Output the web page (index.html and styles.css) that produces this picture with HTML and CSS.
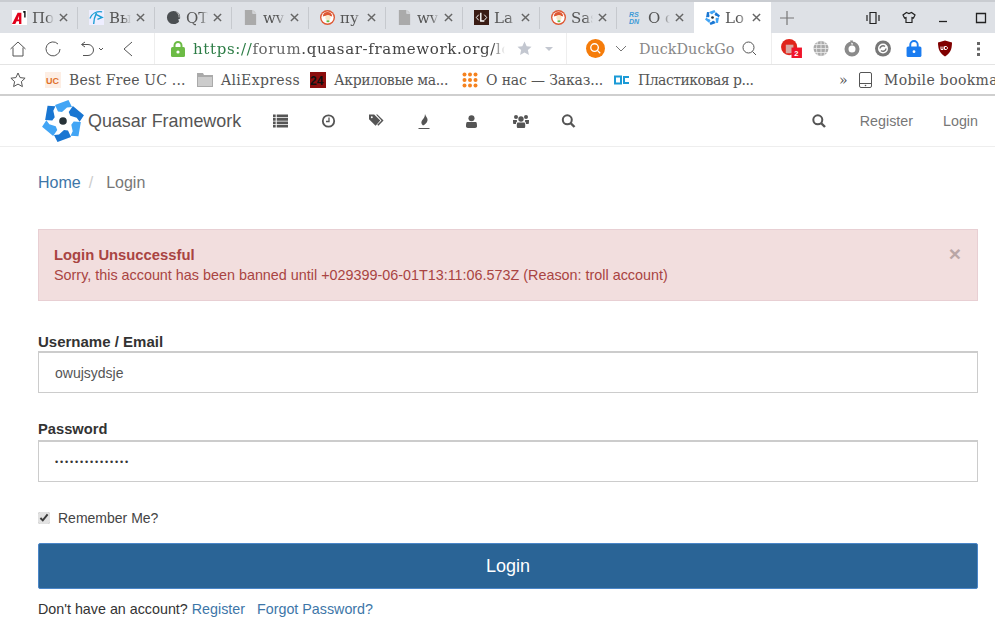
FILE: index.html
```html
<!DOCTYPE html>
<html lang="en">
<head>
<meta charset="utf-8">
<title>Login | Quasar Framework</title>
<link rel="stylesheet" href="styles.css">
</head>
<body>
<svg class="defs" aria-hidden="true">
  <symbol id="quasar" viewBox="-21 -21 42 42">
    <path fill="#42a5f5" d="M-8-16L5.500-21 9-14 4-13.500-1-9-5-9.500z"/>
    <path fill="#1976d2" d="M-8-16L5.500-21 9-14 4-13.500-1-9-5-9.500z" transform="rotate(60)"/>
    <path fill="#42a5f5" d="M-8-16L5.500-21 9-14 4-13.500-1-9-5-9.500z" transform="rotate(120)"/>
    <path fill="#1976d2" d="M-8-16L5.500-21 9-14 4-13.500-1-9-5-9.500z" transform="rotate(180)"/>
    <path fill="#42a5f5" d="M-8-16L5.500-21 9-14 4-13.500-1-9-5-9.500z" transform="rotate(240)"/>
    <path fill="#1976d2" d="M-8-16L5.500-21 9-14 4-13.500-1-9-5-9.500z" transform="rotate(300)"/>
    <circle r="3.800" fill="#263238"/>
  </symbol>
  <symbol id="duck" viewBox="0 0 16 16">
    <circle cx="8" cy="8" r="8" fill="#de5833"/>
    <circle cx="8" cy="8" r="6.500" fill="#fff"/>
    <path fill="#de5833" d="M3 7c0-3 2-5 5-5s5 2 5 5l-3-1H6z"/>
    <circle cx="8.500" cy="8" r="2.800" fill="#f7e6c8"/>
    <path fill="#65bc46" d="M7 11h3v2H7z"/>
  </symbol>
  <symbol id="doc" viewBox="0 0 14 16">
    <path fill="#aaa" d="M1 0h8v4h4v12H1z"/>
    <path fill="#c8c8c8" d="M10 0l3 3h-3z"/>
  </symbol>
  <symbol id="x" viewBox="0 0 10 10">
    <path d="M1 1l8 8M9 1l-8 8" stroke="#666" stroke-width="1.600" fill="none"/>
  </symbol>
</svg>

<div class="tabs">
  <div class="tab">
    <svg class="fav" viewBox="0 0 16 16"><rect width="16" height="16" fill="#fff"/><path fill="#e1001a" d="M0 15L6 3h4v12H7.500v-3H5l-1.500 3zM6 10h1.500V6z" fill-rule="evenodd"/><path fill="#111" d="M12 1h2.500v7H13V3h-1z"/></svg>
    <span class="tab-title">Пос</span>
    <svg class="tab-x"><use href="#x"/></svg>
  </div>
  <div class="tab">
    <svg class="fav" viewBox="0 0 16 16"><rect width="16" height="16" fill="#eef"/><path d="M1 9c2-5 7-8 13-7M8 3C6 7 5 11 5 15M8 5l6 3-5 2" stroke="#1c9fd6" stroke-width="1.500" fill="none"/></svg>
    <span class="tab-title">Вы</span>
    <svg class="tab-x"><use href="#x"/></svg>
  </div>
  <div class="tab">
    <svg class="fav" viewBox="0 0 16 16"><path fill="#4b4f52" d="M8 1a7 7 0 1 0 0 14c3 0 5-1 6-3l-1-2 2-1c1-5-3-8-7-8z"/><path d="M11 2c2 1 3 3 3 6" stroke="#ccc" fill="none"/></svg>
    <span class="tab-title">QT</span>
    <svg class="tab-x"><use href="#x"/></svg>
  </div>
  <div class="tab">
    <svg class="fav"><use href="#doc"/></svg>
    <span class="tab-title">wv</span>
    <svg class="tab-x"><use href="#x"/></svg>
  </div>
  <div class="tab">
    <svg class="fav"><use href="#duck"/></svg>
    <span class="tab-title">пу</span>
    <svg class="tab-x"><use href="#x"/></svg>
  </div>
  <div class="tab">
    <svg class="fav"><use href="#doc"/></svg>
    <span class="tab-title">wv</span>
    <svg class="tab-x"><use href="#x"/></svg>
  </div>
  <div class="tab">
    <svg class="fav" viewBox="0 0 16 16"><rect width="16" height="16" fill="#3a1c14"/><path d="M5 5L2.500 8 5 11M11 5l2.500 3L11 11" stroke="#fff" fill="none"/><path fill="#fff" d="M6.500 3H8v8h3v1.500H6.500z"/></svg>
    <span class="tab-title">La</span>
    <svg class="tab-x"><use href="#x"/></svg>
  </div>
  <div class="tab">
    <svg class="fav"><use href="#duck"/></svg>
    <span class="tab-title">Sas</span>
    <svg class="tab-x"><use href="#x"/></svg>
  </div>
  <div class="tab">
    <svg class="fav" viewBox="0 0 16 16"><text x="1" y="7" class="fav-rs">RS</text><text x="1" y="15" class="fav-rs">DN</text></svg>
    <span class="tab-title">O с</span>
    <svg class="tab-x"><use href="#x"/></svg>
  </div>
  <div class="tab tab-active">
    <svg class="fav"><use href="#quasar"/></svg>
    <span class="tab-title">Lo</span>
    <svg class="tab-x"><use href="#x"/></svg>
  </div>
  <svg class="tab-new" viewBox="0 0 14 14"><path d="M7 0v14M0 7h14" stroke="#777" stroke-width="1.200" fill="none"/></svg>
  <div class="win">
    <svg class="win-ico" viewBox="0 0 14 14"><path d="M4 1.500h6v11H4zM1 4v6M13 4v6" stroke="#222" stroke-width="1.200" fill="none"/></svg>
    <svg class="win-ico" viewBox="0 0 14 14"><path d="M4.500 1.500l2.500 1 2.500-1 3.500 2.500-1.500 3-1.500-.5v5h-6v-5l-1.500.5L1 4z" stroke="#222" stroke-width="1.200" fill="none"/></svg>
    <svg class="win-ico" viewBox="0 0 14 14"><path d="M1 10.500h8" stroke="#222" stroke-width="1.300" fill="none"/></svg>
    <svg class="win-ico" viewBox="0 0 14 14"><path d="M2.500 2.500h9v9h-9z" stroke="#222" stroke-width="1.300" fill="none"/></svg>
  </div>
</div>

<div class="toolbar">
  <div class="nav-btns">
    <svg class="tool tool-home" viewBox="0 0 16 16"><path d="M.5 8L8 1l7.500 7M3 6.500V15h10V6.500" stroke="#555" fill="none"/></svg>
    <svg class="tool tool-reload" viewBox="0 0 16 16"><path d="M13 3A7 7 0 1 0 15 8" stroke="#555" fill="none"/></svg>
    <svg class="tool tool-undo" viewBox="0 0 26 16"><path d="M5 1L1.500 3.500 5 6M2 3.500h6a5.500 5.500 0 0 1 0 11H3" stroke="#555" fill="none"/><path d="M19 7l2 2 2-2" stroke="#555" fill="none"/></svg>
    <svg class="tool tool-back" viewBox="0 0 10 16"><path d="M9 1L1 8l8 7" stroke="#555" fill="none"/></svg>
  </div>
  <div class="address">
    <svg class="lock" viewBox="0 0 14 16"><path d="M3.500 7V4.500a3.500 3.500 0 0 1 7 0V7" stroke="#6cbb45" stroke-width="2" fill="none"/><rect y="6" width="14" height="10" rx="1.500" fill="#6cbb45"/><circle cx="7" cy="11" r="1.600" fill="#fff"/></svg>
    <span class="url"><span class="url-scheme">https://</span><span class="url-mute">forum</span>.quasar-framework.org/login</span>
    <svg class="star-solid" viewBox="0 0 16 16"><path fill="#c3c7d0" d="M8 .5l2.300 5 5.200.6-3.900 3.500 1.100 5.400L8 12.300 3.300 15l1.100-5.400L.5 6.100l5.200-.6z"/></svg>
    <svg class="caret" viewBox="0 0 8 4"><path fill="#c3c7d0" d="M0 0h8L4 4z"/></svg>
  </div>
  <div class="search">
    <svg class="search-logo" viewBox="0 0 20 20"><circle cx="10" cy="10" r="10" fill="#f57c0a"/><circle cx="9" cy="9" r="4" stroke="#fff" stroke-width="1.400" fill="none"/><path d="M12 12l3 3" stroke="#fff" stroke-width="1.400"/></svg>
    <svg class="search-chev" viewBox="0 0 12 7"><path d="M1 1l5 5 5-5" stroke="#777" fill="none"/></svg>
    <span class="search-text">DuckDuckGo</span>
    <svg class="search-mag" viewBox="0 0 15 15"><circle cx="6.500" cy="6.500" r="5.500" stroke="#555" fill="none"/><path d="M10.500 10.500L14 14" stroke="#555" fill="none"/></svg>
  </div>
  <div class="exts">
    <svg class="ext" viewBox="0 0 22 20"><circle cx="8.500" cy="8.500" r="8.500" fill="#e0251b"/><path d="M5 6h8v9H5z" fill="#d9a9a3"/><rect x="11" y="9" width="11" height="11" fill="#f0142a"/><text x="14" y="18" class="ext-num">2</text></svg>
    <svg class="ext" viewBox="0 0 16 16"><circle cx="8" cy="8" r="7.500" fill="#aaa"/><path d="M0 8h16M8 0v16M2 4h12M2 12h12M5 1c-2 4-2 10 0 14M11 1c2 4 2 10 0 14" stroke="#eee" stroke-width=".8" fill="none"/></svg>
    <svg class="ext" viewBox="0 0 16 16"><circle cx="8" cy="8.500" r="5.500" stroke="#8a8a8a" stroke-width="4" fill="none"/><path d="M6 0h3L8 5z" fill="#8a8a8a"/><path d="M7 2l2 1-1 2z" fill="#fff"/></svg>
    <svg class="ext" viewBox="0 0 16 16"><circle cx="8" cy="8" r="8" fill="#777"/><circle cx="8" cy="8" r="5" fill="#fff"/><path d="M5 8a3 3 0 0 1 5-2M11 8a3 3 0 0 1-5 2" stroke="#777" stroke-width="1.500" fill="none"/></svg>
    <svg class="ext" viewBox="0 0 14 16"><path d="M3.500 7V4.500a3.500 3.500 0 0 1 7 0V7" stroke="#1b7cf0" stroke-width="1.800" fill="none"/><rect y="6" width="14" height="10" rx="1.500" fill="#1b7cf0"/><circle cx="7" cy="11" r="1.300" fill="#fff"/></svg>
    <svg class="ext" viewBox="0 0 16 16"><path fill="#800000" d="M8 0l7 2c0 7-2 11-7 14C3 13 1 9 1 2z"/><path d="M4 6v3h2V6M7.500 6v3H9c2 0 2-3 0-3z" stroke="#fff" fill="none"/></svg>
    <svg class="dots" viewBox="0 0 3 14"><path fill="#666" d="M0 0h3v3H0zM0 5.500h3v3H0zM0 11h3v3H0z"/></svg>
  </div>
</div>

<div class="bookmarks">
  <svg class="bm-star" viewBox="0 0 16 16"><path d="M8 1l2.100 4.600 5 .6-3.700 3.400 1 5L8 12.100 3.600 14.600l1-5L.9 6.200l5-.6z" stroke="#555" fill="none"/></svg>
  <div class="bm bm-1">
    <svg class="bm-ico" viewBox="0 0 16 16"><rect width="16" height="16" fill="#fdeee4"/><text x="1" y="12" class="bm-uc">UC</text></svg>
    <span>Best Free UC ...</span>
  </div>
  <div class="bm bm-2">
    <svg class="bm-ico" viewBox="0 0 16 14"><path fill="#aaa" d="M0 0h6l1 2h9v12H0z"/><path fill="#ccc" d="M1 4h14v9H1z"/></svg>
    <span>AliExpress</span>
  </div>
  <div class="bm bm-3">
    <svg class="bm-ico" viewBox="0 0 16 16"><rect width="16" height="16" fill="#8b0d0d"/><text x="0" y="13" class="bm-24">24</text></svg>
    <span>Акриловые ма...</span>
  </div>
  <div class="bm bm-4">
    <svg class="bm-ico" viewBox="0 0 16 16"><g fill="#f5821f"><circle cx="2.500" cy="2.500" r="2"/><circle cx="8" cy="2.500" r="2"/><circle cx="13.500" cy="2.500" r="2"/><circle cx="2.500" cy="8" r="2"/><circle cx="8" cy="8" r="2"/><circle cx="13.500" cy="8" r="2"/><circle cx="2.500" cy="13.500" r="2"/><circle cx="8" cy="13.500" r="2"/><circle cx="13.500" cy="13.500" r="2"/></g></svg>
    <span>О нас — Заказ...</span>
  </div>
  <div class="bm bm-5">
    <svg class="bm-ico" viewBox="0 0 16 10"><path d="M7 1.500H1v7h6zM15 2H10v6h5" stroke="#1b9ad6" stroke-width="2" fill="none"/></svg>
    <span>Пластиковая р...</span>
  </div>
  <span class="bm-more">»</span>
  <svg class="bm-phone" viewBox="0 0 13 16"><rect x=".5" y=".5" width="12" height="15" rx="1.500" stroke="#555" fill="none"/><path d="M.5 11.500h12" stroke="#555"/><circle cx="6.500" cy="13.500" r=".8" fill="#555"/></svg>
  <span class="bm-mobile">Mobile bookmarks</span>
</div>

<header class="navbar">
  <a class="brand">
    <svg class="brand-logo"><use href="#quasar"/></svg>
    <span class="brand-name">Quasar Framework</span>
  </a>
  <nav class="nav-icons">
    <a class="nav-icon"><svg viewBox="0 0 14 12"><path fill="#555" d="M0 0h2.500v2.500H0zM3.500 0H14v2.500H3.500zM0 3.250h2.500v2.500H0zM3.500 3.250H14v2.500H3.500zM0 6.500h2.500V9H0zM3.500 6.500H14V9H3.500zM0 9.750h2.500V12H0zM3.500 9.750H14V12H3.500z"/></svg></a>
    <a class="nav-icon"><svg viewBox="0 0 14 14"><circle cx="7" cy="7" r="5.700" stroke="#555" stroke-width="1.800" fill="none"/><path d="M7.500 3.500v4H4.500" stroke="#555" stroke-width="1.300" fill="none"/></svg></a>
    <a class="nav-icon"><svg viewBox="0 0 16 14"><path fill="#555" d="M0 0h5.500L12 6.500 7 12 0 5zM3 2a1 1 0 1 0 0 2 1 1 0 0 0 0-2z" fill-rule="evenodd"/><path fill="#555" d="M7.500 0H9l6.500 6.500L10 12l-1.200-1 4.500-4.500z"/></svg></a>
    <a class="nav-icon nav-fire"><svg viewBox="0 0 12 15"><path fill="#555" d="M7 0c1 3 3 4 2.500 6.500C9 9 7 10.500 5 11.500 3 10 3 8 4 6.500c1-1.500 3-3 3-6.500z"/><path d="M.5 14.500h11" stroke="#555"/></svg></a>
    <a class="nav-icon nav-user"><svg viewBox="0 0 12 14"><circle cx="6" cy="3.500" r="3.300" fill="#555"/><path fill="#555" d="M1 7.500h10c1 1 1 3 1 5 0 1-1 1.500-2 1.500H2c-1 0-2-.5-2-1.500 0-2 0-4 1-5z"/></svg></a>
    <a class="nav-icon nav-users"><svg viewBox="0 0 16 14"><circle cx="8" cy="5" r="2.700" fill="#555"/><circle cx="3" cy="3" r="2" fill="#555"/><circle cx="13" cy="3" r="2" fill="#555"/><path fill="#555" d="M4.500 8.500h7c1 1 1 5.500 0 5.500h-7c-1 0-1-4.500 0-5.500zM0 6h3.800l.3 1.500C3 8 3 9 3 10H.5C0 10 0 7 0 6zM16 6h-3.800l-.3 1.500c1 .5 1 1.500 1 2.500h2.600c.5 0 .5-3 .5-4z"/></svg></a>
    <a class="nav-icon"><svg viewBox="0 0 14 14"><circle cx="5.800" cy="5.800" r="4.500" stroke="#555" stroke-width="2" fill="none"/><path d="M9 9l4 4" stroke="#555" stroke-width="2.400"/></svg></a>
  </nav>
  <div class="nav-right">
    <a class="nav-search"><svg viewBox="0 0 14 14"><circle cx="5.800" cy="5.800" r="4.500" stroke="#555" stroke-width="2" fill="none"/><path d="M9 9l4 4" stroke="#555" stroke-width="2.400"/></svg></a>
    <a class="nav-link">Register</a>
    <a class="nav-link">Login</a>
  </div>
</header>

<main class="page">
  <ol class="crumbs">
    <li><a class="link">Home</a></li>
    <li class="crumb-sep">/</li>
    <li class="crumb-current">Login</li>
  </ol>

  <div class="alert">
    <strong class="alert-title">Login Unsuccessful</strong>
    <p class="alert-text">Sorry, this account has been banned until +029399-06-01T13:11:06.573Z (Reason: troll account)</p>
    <span class="alert-close">×</span>
  </div>

  <form class="form">
    <label class="field-label" for="user">Username / Email</label>
    <input class="field" id="user" type="text" value="owujsydsje">
    <label class="field-label field-label-next" for="pass">Password</label>
    <input class="field field-pass" id="pass" type="password" value="owujsydsjeowujs">
    <label class="remember"><input class="check" type="checkbox" checked> Remember Me?</label>
    <button class="submit" type="button">Login</button>
    <p class="foot">Don't have an account? <a class="link">Register</a> <a class="link foot-forgot">Forgot Password?</a></p>
  </form>
</main>
</body>
</html>
```

FILE: styles.css
```css
* { box-sizing: border-box; }
html, body { margin: 0; height: 638px; overflow: hidden; background: #fff; }
body { font-family: "Liberation Sans", Arial, sans-serif; font-size: 14px; color: #333; }
.defs { display: none; }

/* Browser chrome */
.tabs {
  height: 33px;
  padding-left: 1px;
  background: #dee1e6;
  border-top: 2px solid #c9ccd1;
  display: flex;
  align-items: center;
  font-family: "DejaVu Serif", serif;
}
.tab {
  width: 77px;
  height: 31px;
  display: flex;
  align-items: center;
  padding-left: 11px;
  flex: none;
  background: linear-gradient(#c6c9ce, #c6c9ce) right center / 1px 22px no-repeat;
}
.tab:nth-of-type(9) { background: none; }
.tab-active { background: #fff; }
.fav { width: 15px; height: 15px; flex: none; }
.fav-rs { font: italic bold 7.500px "Liberation Sans", sans-serif; fill: #3d9bd8; }
.tab-title {
  width: 22px;
  margin-left: 5px;
  overflow: hidden;
  white-space: nowrap;
  font-size: 15px;
  color: #555;
  -webkit-mask-image: linear-gradient(to right, #000 65%, transparent);
  mask-image: linear-gradient(to right, #000 65%, transparent);
}
.tab-x { width: 9px; height: 9px; margin-left: 5px; flex: none; }
.tab-new { width: 14px; height: 14px; margin-left: 9px; flex: none; }
.win { margin-left: auto; display: flex; align-items: center; gap: 22px; padding-right: 7px; }
.win-ico { width: 14px; height: 14px; }

.toolbar {
  height: 32px;
  background: #fff;
  display: flex;
  align-items: center;
  border-bottom: 1px solid #e4e4e4;
  font-family: "DejaVu Serif", serif;
}
.nav-btns {
  width: 155px;
  height: 100%;
  display: flex;
  align-items: center;
  padding-left: 10px;
  border-right: 1px solid #eee;
}
.tool { height: 16px; flex: none; }
.tool-home { width: 16px; }
.tool-reload { width: 16px; margin-left: 19px; }
.tool-undo { width: 26px; margin-left: 19px; }
.tool-back { width: 10px; margin-left: 17px; }
.address {
  width: 412px;
  height: 100%;
  display: flex;
  align-items: center;
  padding-left: 16px;
  border-right: 1px solid #eee;
}
.lock { width: 14px; height: 16px; flex: none; }
.url {
  width: 312px;
  margin-left: 8px;
  overflow: hidden;
  white-space: nowrap;
  font-size: 15px;
  letter-spacing: .65px;
  color: #444;
  -webkit-mask-image: linear-gradient(to right, #000 96%, transparent);
  mask-image: linear-gradient(to right, #000 96%, transparent);
}
.url-scheme { color: #2d7d46; }
.url-mute { color: #666; }
.star-solid { width: 15px; height: 15px; margin-left: 12px; flex: none; }
.caret { width: 8px; height: 4px; margin-left: 13px; flex: none; }
.search {
  width: 205px;
  height: 100%;
  display: flex;
  align-items: center;
  padding-left: 19px;
  border-right: 1px solid #eee;
}
.search-logo { width: 19px; height: 19px; flex: none; }
.search-chev { width: 12px; height: 7px; margin-left: 10px; flex: none; }
.search-text { width: 103px; margin-left: 12px; font-size: 14.400px; color: #888; white-space: nowrap; }
.search-mag { width: 15px; height: 15px; flex: none; }
.exts { flex: 1; display: flex; align-items: center; padding-left: 9px; }
.ext { height: 17px; width: 16px; margin-right: 15px; flex: none; }
.ext:first-child { width: 21px; margin-right: 11px; height: 19px; }
.ext-num { font: bold 8px "Liberation Sans", sans-serif; fill: #fff; }
.dots { width: 3px; height: 14px; margin-left: 9px; }

.bookmarks {
  height: 31px;
  background: #fff;
  border-bottom: 2px solid #cfcfcf;
  display: flex;
  align-items: center;
  font-family: "DejaVu Serif", serif;
  font-size: 14px;
  color: #555;
  white-space: nowrap;
  overflow: hidden;
}
.bm-star { width: 16px; height: 16px; margin-left: 10px; flex: none; }
.bm { display: flex; align-items: center; flex: none; }
.bm-ico { width: 16px; height: 16px; margin-right: 8px; flex: none; }
.bm-1 { margin-left: 19px; width: 152px; letter-spacing: .2px; }
.bm-2 { width: 113px; letter-spacing: .35px; }
.bm-3 { width: 152px; letter-spacing: -.35px; }
.bm-4 { width: 152px; letter-spacing: -.15px; }
.bm-5 { width: 225px; letter-spacing: -.5px; }
.bm-uc { font: bold 9px "Liberation Sans", sans-serif; fill: #e0702a; letter-spacing: 0; }
.bm-24 { font: bold 12px "Liberation Sans", sans-serif; fill: #111; letter-spacing: 0; }
.bm-more { width: 20px; flex: none; }
.bm-phone { width: 13px; height: 16px; flex: none; margin-right: 12px; }
.bm-mobile { flex: none; letter-spacing: .35px; }

/* Forum navbar */
.navbar {
  height: 51px;
  padding-left: 42px;
  border-bottom: 1px solid #eee;
  display: flex;
  align-items: center;
}
.brand { display: flex; align-items: center; width: 216px; flex: none; }
.brand-logo { width: 42px; height: 42px; flex: none; }
.brand-name { margin-left: 4px; font-size: 17.900px; color: #555; white-space: nowrap; }
.nav-icons { display: flex; align-items: center; margin-left: 15px; }
.nav-icon { width: 48px; display: flex; align-items: center; }
.nav-icon svg { width: 15px; height: 14px; }
.nav-icon.nav-fire svg { width: 12px; height: 15px; margin-left: 1px; }
.nav-icon.nav-user svg { width: 11px; height: 13px; margin-left: 1px; }
.nav-icon.nav-users svg { width: 16px; height: 14px; }
.nav-right { margin-left: auto; display: flex; align-items: center; padding-right: 17px; }
.nav-search { display: flex; margin-right: 34px; }
.nav-search svg { width: 14px; height: 14px; }
.nav-link { color: #777; margin-left: 30px; font-size: 14.300px; }
.nav-search + .nav-link { margin-left: 0; }

/* Page */
.page { padding: 0 17px 0 38px; }
.crumbs {
  list-style: none;
  margin: 0;
  padding: 27px 0 0;
  height: 82px;
  display: flex;
  font-size: 16px;
  line-height: 18px;
}
.crumb-sep { color: #ccc; margin: 0 13px 0 8px; }
.crumb-current { color: #777; }
.link { color: #3d76a8; }

.alert {
  position: relative;
  height: 72px;
  padding: 15px 15px;
  background: #f2dede;
  border: 1px solid #e8cfd3;
  color: #a94442;
  line-height: 20px;
}
.alert-title { display: block; font-size: 14.800px; }
.alert-text { margin: 0; font-size: 14.370px; }
.alert-close {
  position: absolute;
  top: 13px;
  right: 16px;
  font-size: 21px;
  font-weight: bold;
  color: #b9a6a6;
  line-height: 21px;
}

.form { display: flex; flex-direction: column; align-items: stretch; }
.field-label {
  margin-top: 32px;
  height: 18px;
  font-size: 15px;
  font-weight: bold;
  line-height: 17px;
  color: #333;
}
.field-label-next { margin-top: 28px; font-size: 14.700px; }
.field {
  height: 42px;
  margin-top: 0;
  padding: 0 16px;
  border: 1px solid #ccc;
  border-top-width: 2px;
  font: 14px "Liberation Sans", sans-serif;
  color: #555;
  outline: none;
}
.field-pass { margin-top: 1px; font-size: 9px; letter-spacing: 1.850px; color: #333; }
.remember {
  display: flex;
  align-items: center;
  margin-top: 26px;
  height: 20px;
  font-size: 14px;
  color: #444;
  gap: 8px;
}
.check { width: 12px; height: 12px; margin: 0; accent-color: #e2e2e2; }
.submit {
  height: 46px;
  margin-top: 15px;
  background: #2a6496;
  border: 1px solid #4b86c8;
  border-radius: 2px;
  color: #fff;
  font: 18px "Liberation Sans", sans-serif;
}
.foot { margin: 10px 0 0; font-size: 14.300px; line-height: 20px; }
.foot-forgot { margin-left: 8px; }
```
